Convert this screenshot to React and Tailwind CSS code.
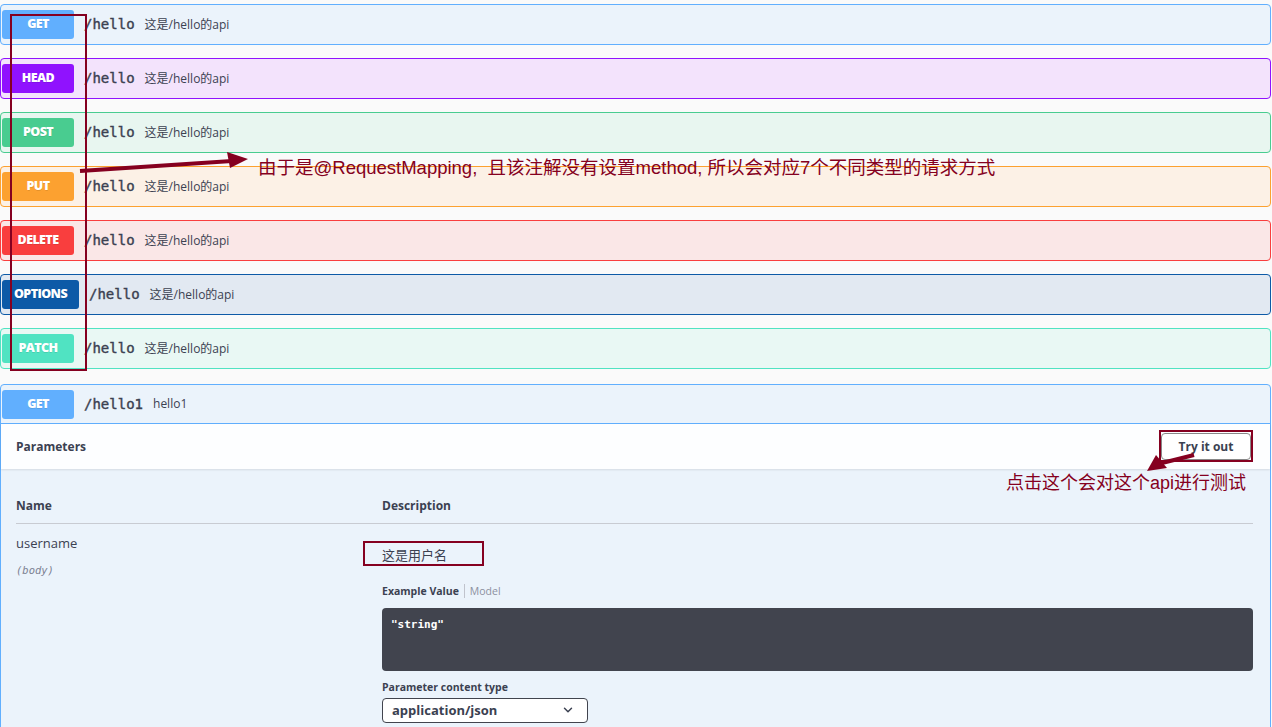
import { ChevronDown } from 'lucide-react';

// méthodes de la même route /hello
const ROUTES = [
  { method: 'GET', box: 'border-[#61affe] bg-[#ebf3fb]', badge: 'bg-[#61affe] w-[72px]' },
  { method: 'HEAD', box: 'border-[#9012fe] bg-[#f3e3fc]', badge: 'bg-[#9012fe] w-[72px]' },
  { method: 'POST', box: 'border-[#49cc90] bg-[#e8f6f0]', badge: 'bg-[#49cc90] w-[72px]' },
  { method: 'PUT', box: 'border-[#fca130] bg-[#fcf1e6]', badge: 'bg-[#fca130] w-[72px]' },
  { method: 'DELETE', box: 'border-[#f93e3e] bg-[#fae7e7]', badge: 'bg-[#f93e3e] w-[72px]' },
  { method: 'OPTIONS', box: 'border-[#0d5aa7] bg-[#e2e9f2]', badge: 'bg-[#0d5aa7] w-[77px]' },
  { method: 'PATCH', box: 'border-[#50e3c2] bg-[#e9f8f4]', badge: 'bg-[#50e3c2] w-[72px]' },
];

const sans = { fontFamily: '"Open Sans", "Noto Sans CJK SC", sans-serif' };
const mono = { fontFamily: '"DejaVu Sans Mono", monospace' };
const note = { fontFamily: '"Liberation Sans", "Noto Sans CJK SC", sans-serif' };

function Badge({ method, className }) {
  return (
    <span
      className={`h-[29px] rounded-[3px] flex items-center justify-center text-white text-[12.5px] font-extrabold tracking-[-0.6px] [text-shadow:0_1px_0_rgba(0,0,0,0.1)] ${className}`}
      style={sans}
    >
      {method}
    </span>
  );
}

function Path({ children }) {
  return (
    <span className="ml-[10px] text-[14px] text-[#3b4151] [-webkit-text-stroke:0.4px_#3b4151]" style={mono}>
      {children}
    </span>
  );
}

function RouteRow({ r }) {
  return (
    <div className={`h-[41px] border rounded-[4px] flex items-center pl-[1px] ${r.box}`}>
      <Badge method={r.method} className={r.badge} />
      <Path>/hello</Path>
      <span className="ml-[10px] text-[12px] text-[#3b4151]">这是/hello的api</span>
    </div>
  );
}

export default function App() {
  return (
    <div className="relative min-h-[727px] bg-[#fafafa] pt-[4px] pr-[1px] overflow-hidden" style={sans}>
      <div className="flex flex-col gap-[13px]">
        {ROUTES.map((r) => <RouteRow key={r.method} r={r} />)}
      </div>

      {/* bloc déplié /hello1 */}
      <div className="mt-[15px] border border-[#61affe] rounded-t-[4px] bg-[#ebf3fb] h-[360px]">
        <div className="h-[39px] border-b border-[#61affe] flex items-center pl-[1px]">
          <Badge method="GET" className="bg-[#61affe] w-[72px]" />
          <Path>/hello1</Path>
          <span className="ml-[10px] text-[12px] text-[#3b4151]">hello1</span>
        </div>

        <div className="h-[45px] bg-white/90 shadow-[0_1px_2px_rgba(0,0,0,0.1)] flex items-center justify-between pl-[15px] pr-[19px]">
          <span className="text-[12px] font-bold text-[#3b4151]">Parameters</span>
          <button className="w-[90px] h-[27px] border border-[#888] rounded-[4px] bg-white text-[12px] font-bold text-[#3b4151]">
            Try it out
          </button>
        </div>

        <div className="pl-[15px] pr-[17px] pt-[28px]">
          <div className="grid grid-cols-[366px_1fr] pb-[8px] border-b border-[#c8cbd2] text-[12px] font-bold text-[#3b4151]">
            <span>Name</span>
            <span>Description</span>
          </div>

          <div className="grid grid-cols-[366px_1fr] pt-[9px]">
            <div>
              <div className="text-[13px] text-[#3b4151] leading-[20px]">username</div>
              <div className="mt-[10px] text-[10.5px] italic text-[#7d8293]" style={mono}>(body)</div>
            </div>
            <div>
              <div className="mt-[13px] text-[13px] text-[#3b4151] leading-[18px]">这是用户名</div>
              <div className="mt-[20px] flex items-center text-[10.5px] leading-[14px]">
                <span className="font-bold text-[#3b4151] pr-[5px] border-r border-[#c0c3cc]">Example Value</span>
                <span className="pl-[5px] text-[#8b90a0]">Model</span>
              </div>
              <div className="mt-[10px] h-[63px] rounded-[4px] bg-[#41444e] px-[9px] pt-[9px] text-[11px] font-bold text-white" style={mono}>
                "string"
              </div>
              <div className="mt-[9px] text-[10.5px] font-bold text-[#3b4151]">Parameter content type</div>
              <div className="mt-[2px] w-[206px] h-[25px] border border-[#41444e] rounded-[4px] bg-white flex items-center justify-between pl-[9px] pr-[12px] text-[13px] font-bold text-[#3b4151]">
                application/json
                <ChevronDown size={14} strokeWidth={2.5} />
              </div>
            </div>
          </div>
        </div>
      </div>

      {/* annotations */}
      <div className="absolute left-[10px] top-[14px] w-[77px] h-[357px] border-2 border-[#850020]" />
      <div className="absolute left-[1159px] top-[430px] w-[94px] h-[32px] border-2 border-[#850020]" />
      <div className="absolute left-[363px] top-[541px] w-[121px] h-[25px] border-2 border-[#850020]" />
      <svg className="absolute left-0 top-0 pointer-events-none" width="1272" height="727">
        <line x1="80" y1="171" x2="232" y2="161" stroke="#850020" strokeWidth="4" />
        <polygon points="248,159 227,152 230,168" fill="#850020" />
        <line x1="1194" y1="455" x2="1162" y2="463" stroke="#850020" strokeWidth="4" />
        <polygon points="1147,471 1156,455 1167,468" fill="#850020" />
      </svg>
      <span className="absolute left-[258px] top-[155px] text-[18.5px] text-[#850020] leading-[26px] whitespace-nowrap" style={note}>
        由于是@RequestMapping,&nbsp; 且该注解没有设置method, 所以会对应7个不同类型的请求方式
      </span>
      <span className="absolute left-[1006px] top-[470px] text-[18px] text-[#850020] leading-[26px] whitespace-nowrap" style={note}>
        点击这个会对这个api进行测试
      </span>
    </div>
  );
}
